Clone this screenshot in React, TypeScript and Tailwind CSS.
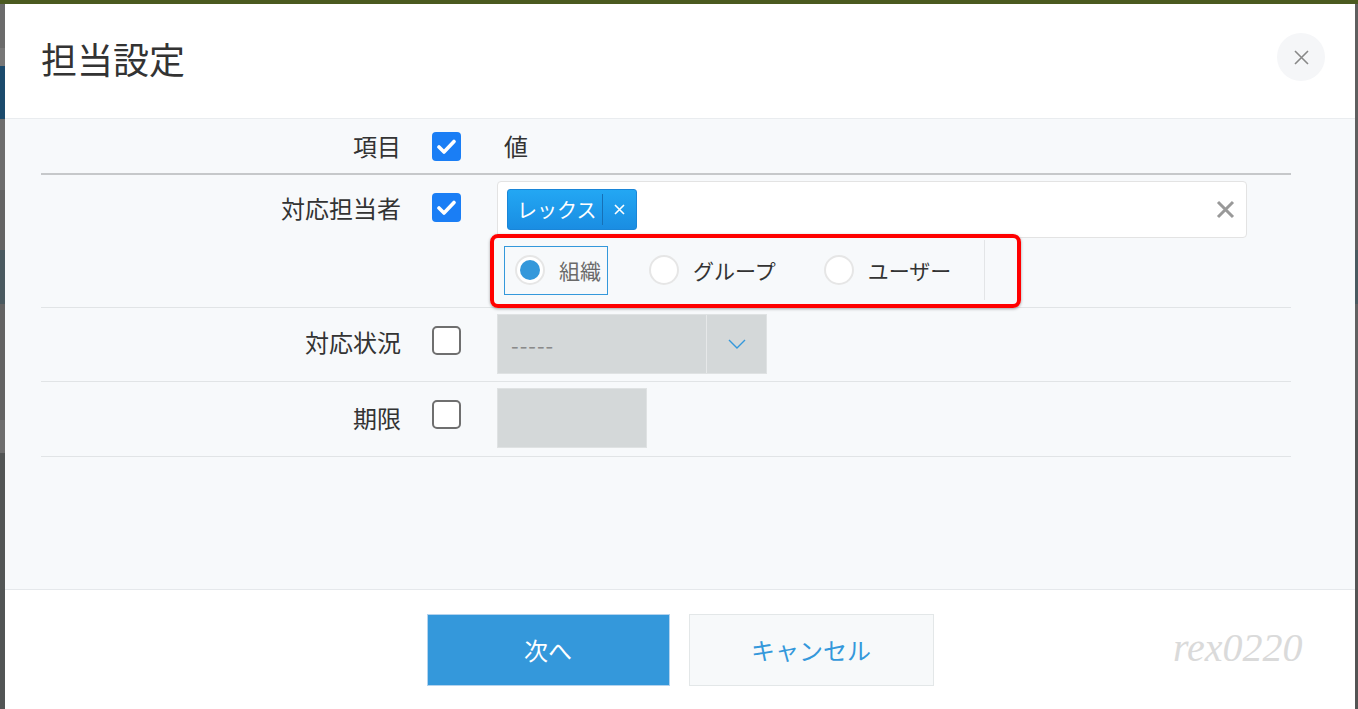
import React from 'react';

const CheckBox: React.FC<{ checked?: boolean; className?: string }> = ({ checked, className = '' }) =>
  checked ? (
    <span className={`flex h-[29px] w-[29px] items-center justify-center rounded-[4px] bg-[#1a7ef5] ${className}`}>
      <svg width="19" height="15" viewBox="0 0 19 15" fill="none">
        <path d="M2 8l5 5L17 2.5" stroke="#fff" strokeWidth="3.6" strokeLinecap="round" strokeLinejoin="round" />
      </svg>
    </span>
  ) : (
    <span className={`block h-[29px] w-[29px] rounded-[5px] border-2 border-[#6f6f6f] bg-white ${className}`} />
  );

interface RadioProps {
  label: string;
  selected?: boolean;
}

const Radio: React.FC<RadioProps> = ({ label, selected }) => (
  <div
    className={`flex h-[49px] items-center border pl-[10px] pr-[6px] ${
      selected ? 'border-[#3498db]' : 'border-transparent'
    }`}
  >
    <span className="flex h-[30px] w-[30px] items-center justify-center rounded-full border-2 border-[#e6e6e6] bg-white">
      {selected && <span className="block h-[20px] w-[20px] rounded-full bg-[#3498db]" />}
    </span>
    <span className={`ml-[14px] text-[21px] leading-none ${selected ? 'text-[#6a6a6a]' : 'text-[#333]'}`}>
      {label}
    </span>
  </div>
);

const App: React.FC = () => {
  return (
    <div className="flex h-[709px] w-[1358px] flex-col overflow-hidden bg-[#5e5e5e] font-['Noto_Sans_CJK_JP','Noto_Sans',sans-serif] text-[#333]">
      <div className="h-[4px] bg-[#4b5a20]" />
      <div className="flex flex-1">
        {/* page behind the overlay, left edge */}
        <div className="flex w-[5px] flex-col">
          <div className="h-[44px] bg-[#6b6b6b]" />
          <div className="h-[18px] bg-[#777]" />
          <div className="h-[53px] bg-[#1b4a6c]" />
          <div className="h-[71px] bg-[#6d6d6d]" />
          <div className="h-[60px] bg-[#646464]" />
          <div className="h-[54px] bg-[#4a5a60]" />
          <div className="h-[116px] bg-[#636363]" />
          <div className="h-[33px] bg-[#6e6e6e]" />
          <div className="flex-1 bg-[#525555]" />
        </div>

        <div className="flex w-[1350px] flex-col bg-white">
          {/* header */}
          <div className="flex h-[115px] items-start justify-between border-b border-[#e9ecef]">
            <h1 className="ml-[36px] mt-[36px] text-[36px] font-normal leading-[36px] text-[#333]">担当設定</h1>
            <button
              type="button"
              className="mr-[30px] mt-[29px] flex h-[48px] w-[48px] items-center justify-center rounded-full bg-[#f5f6f8]"
            >
              <svg width="15" height="15" viewBox="0 0 15 15">
                <path d="M1 1l13 13M14 1L1 14" stroke="#888" strokeWidth="1.6" />
              </svg>
            </button>
          </div>

          {/* body */}
          <div className="h-[471px] border-b border-[#e5e8eb] bg-[#f7f9fb] pl-[36px]">
            <div className="w-[1250px]">
              <div className="flex h-[56px] items-center border-b-2 border-[#c6c8ca]">
                <div className="w-[360px] text-right text-[24px] leading-[36px]">項目</div>
                <div className="w-[96px] pl-[31px]">
                  <CheckBox checked />
                </div>
                <div className="pl-[7px] text-[24px] leading-[36px]">値</div>
              </div>

              <div className="flex h-[133px] items-start border-b border-[#e1e4e6]">
                <div className="mt-[15px] w-[360px] text-right text-[24px] leading-[36px]">対応担当者</div>
                <div className="w-[96px] pl-[31px] pt-[18px]">
                  <CheckBox checked />
                </div>
                <div className="flex flex-col pt-[6px]">
                  <div className="flex h-[57px] w-[750px] items-center justify-between rounded-[4px] border border-[#e3e3e3] bg-white pl-[9px] pr-[11px]">
                    <div className="flex h-[41px] items-center rounded-[3px] border border-[#1a86d8] bg-gradient-to-b from-[#23a7f3] to-[#1a8de2] text-white">
                      <span className="pl-[9px] pr-[6px] text-[20px] leading-none">レックス</span>
                      <span className="h-[31px] w-px bg-[#1670b6]" />
                      <span className="flex w-[33px] items-center justify-center">
                        <svg width="11" height="11" viewBox="0 0 11 11">
                          <path d="M1 1l9 9M10 1L1 10" stroke="#fff" strokeWidth="1.6" />
                        </svg>
                      </span>
                    </div>
                    <svg width="19" height="19" viewBox="0 0 19 19">
                      <path d="M2 2l15 15M17 2L2 17" stroke="#999" strokeWidth="3" />
                    </svg>
                  </div>
                  <div className="relative mt-[2px] flex h-[60px] w-[488px] items-center gap-[30px] border-r border-[#e3e5e7] pl-[7px]">
                    <Radio label="組織" selected />
                    <Radio label="グループ" />
                    <Radio label="ユーザー" />
                    <div className="pointer-events-none absolute left-[-7px] top-[-6px] h-[74px] w-[531px] rounded-[8px] border-4 border-[#ff0000] shadow-[0_1px_3px_rgba(0,0,0,0.35)]" />
                  </div>
                </div>
              </div>

              <div className="flex h-[74px] items-start border-b border-[#e1e4e6]">
                <div className="mt-[16px] w-[360px] text-right text-[24px] leading-[36px]">対応状況</div>
                <div className="w-[96px] pl-[31px] pt-[18px]">
                  <CheckBox />
                </div>
                <div className="mt-[6px] flex h-[60px] w-[270px] border border-[#dfe2e3] bg-[#d4d8d9]">
                  <div className="flex w-[208px] items-center pl-[13px] text-[22px] tracking-[1px] text-[#8a8a8a]">-----</div>
                  <div className="w-px bg-[#e6e8e9]" />
                  <div className="flex flex-1 items-center justify-center">
                    <svg width="18" height="10" viewBox="0 0 18 10" fill="none">
                      <path d="M1 1l8 8 8-8" stroke="#3498db" strokeWidth="1.4" />
                    </svg>
                  </div>
                </div>
              </div>

              <div className="flex h-[75px] items-start border-b border-[#e1e4e6]">
                <div className="mt-[18px] w-[360px] text-right text-[24px] leading-[36px]">期限</div>
                <div className="w-[96px] pl-[31px] pt-[18px]">
                  <CheckBox />
                </div>
                <div className="mt-[6px] h-[60px] w-[150px] border border-[#dfe2e3] bg-[#d4d8d9]" />
              </div>
            </div>
          </div>

          {/* footer */}
          <div className="relative flex flex-1 items-start justify-center gap-[19px] pt-[24px]">
            <button
              type="button"
              className="h-[72px] w-[243px] border border-[#b3d3ee] bg-[#3498db] text-[24px] text-white"
            >
              次へ
            </button>
            <button
              type="button"
              className="h-[72px] w-[245px] border border-[#e3e7e8] bg-[#f7f9fa] text-[24px] text-[#3498db]"
            >
              キャンセル
            </button>
            <span className="absolute left-[1168px] top-[38px] font-['Liberation_Serif',serif] text-[40px] italic leading-[40px] text-[#dadada]">
              rex0220
            </span>
          </div>
        </div>

        <div className="flex w-[3px] flex-col">
          <div className="h-[246px] bg-[#5f5f5f]" />
          <div className="h-[54px] bg-[#4a5a60]" />
          <div className="h-[116px] bg-[#616161]" />
          <div className="flex-1 bg-[#545454]" />
        </div>
      </div>
    </div>
  );
};

export default App;
